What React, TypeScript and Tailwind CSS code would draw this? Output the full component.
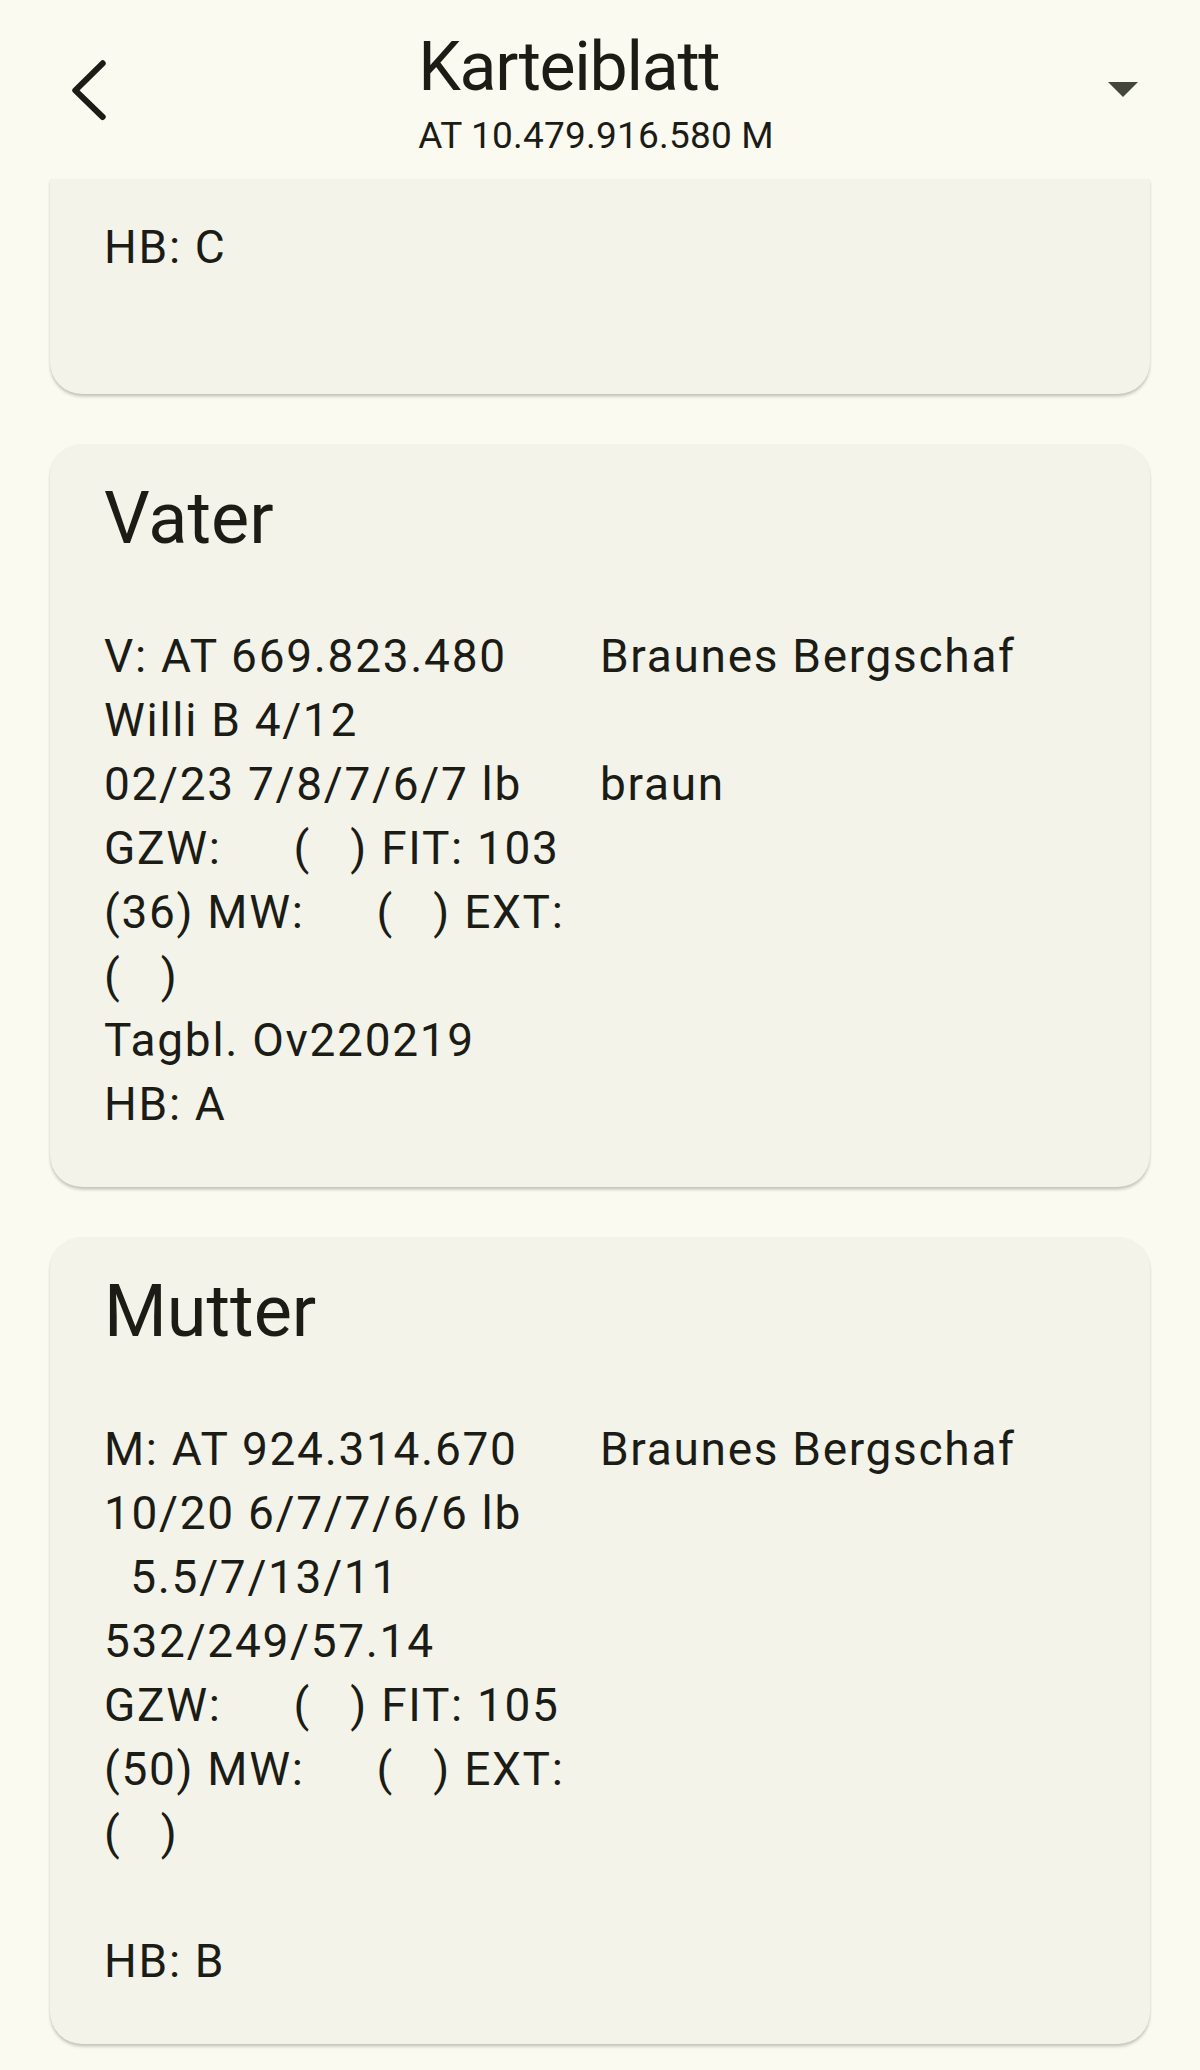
import React from 'react';

type Row = { left: string; right?: string };

const vaterRows: Row[] = [
  { left: 'V: AT 669.823.480', right: 'Braunes Bergschaf' },
  { left: 'Willi B 4/12' },
  { left: '02/23 7/8/7/6/7 lb', right: 'braun' },
  { left: 'GZW:     \u200A(   ) FIT: 103' },
  { left: '(36) MW:     \u200A(   ) EXT:' },
  { left: '(   )' },
  { left: 'Tagbl. Ov220219' },
  { left: 'HB: A' },
];

const mutterRows: Row[] = [
  { left: 'M: AT 924.314.670', right: 'Braunes Bergschaf' },
  { left: '10/20 6/7/7/6/6 lb' },
  { left: '  5.5/7/13/11' },
  { left: '532/249/57.14' },
  { left: 'GZW:     \u200A(   ) FIT: 105' },
  { left: '(50) MW:     \u200A(   ) EXT:' },
  { left: '(   )' },
  { left: '' },
  { left: 'HB: B' },
];

const Lines = ({ rows }: { rows: Row[] }) => (
  <div className="grid grid-cols-2 text-[46px] leading-[64px] tracking-[1.7px]">
    {rows.map((r, i) => (
      <React.Fragment key={i}>
        <div className="whitespace-pre h-[64px]">{r.left}</div>
        <div className="whitespace-pre h-[64px]">{r.right ?? ''}</div>
      </React.Fragment>
    ))}
  </div>
);

const Card = ({ title, rows }: { title: string; rows: Row[] }) => (
  <div className="bg-[#f3f3e9] rounded-[32px] shadow-[0_3px_3px_rgba(0,0,0,0.16),0_1px_2px_rgba(0,0,0,0.08)] px-[54px] pt-[33px] pb-[51px]">
    <h2 className="text-[72px] leading-[84px] mb-[63px]">{title}</h2>
    <Lines rows={rows} />
  </div>
);

const App = () => {
  return (
    <div className="min-h-screen bg-[#fafaf0] text-[#1c1c16] font-['Roboto',sans-serif]">
      {/* Header */}
      <header className="h-[179px] grid grid-cols-[1fr_auto_1fr] items-center">
        <div className="pl-[66px]">
          <svg width="48" height="72" viewBox="0 0 48 72" fill="none">
            <path d="M36.7 9.3 L9.3 36.3 L36.7 63" stroke="#1c1c16" strokeWidth="6" strokeLinecap="round" strokeLinejoin="round" />
          </svg>
        </div>
        <div className="flex flex-col items-start self-start pt-[29px] mr-[8px]">
          <h1 className="text-[68px] leading-[76px] tracking-[-1.3px]">Karteiblatt</h1>
          <p className="text-[37px] leading-[44px] tracking-[0.2px] mt-[9px]">AT 10.479.916.580 M</p>
        </div>
        <div className="flex justify-end pr-[62px]">
          <svg width="30" height="15" viewBox="0 0 30 15">
            <path d="M0 0 H30 L15 15 Z" fill="#45463a" />
          </svg>
        </div>
      </header>

      {/* Cards */}
      <div className="px-[50px] flex flex-col gap-[50px] pb-[26px]">
        <div className="bg-[#f3f3e9] rounded-b-[32px] shadow-[0_3px_3px_rgba(0,0,0,0.16),0_1px_2px_rgba(0,0,0,0.08)] px-[54px] pt-[36px] pb-[51px]">
          <Lines rows={[{ left: 'HB: C' }, { left: '' }]} />
        </div>
        <Card title="Vater" rows={vaterRows} />
        <Card title="Mutter" rows={mutterRows} />
      </div>
    </div>
  );
};

export default App;
